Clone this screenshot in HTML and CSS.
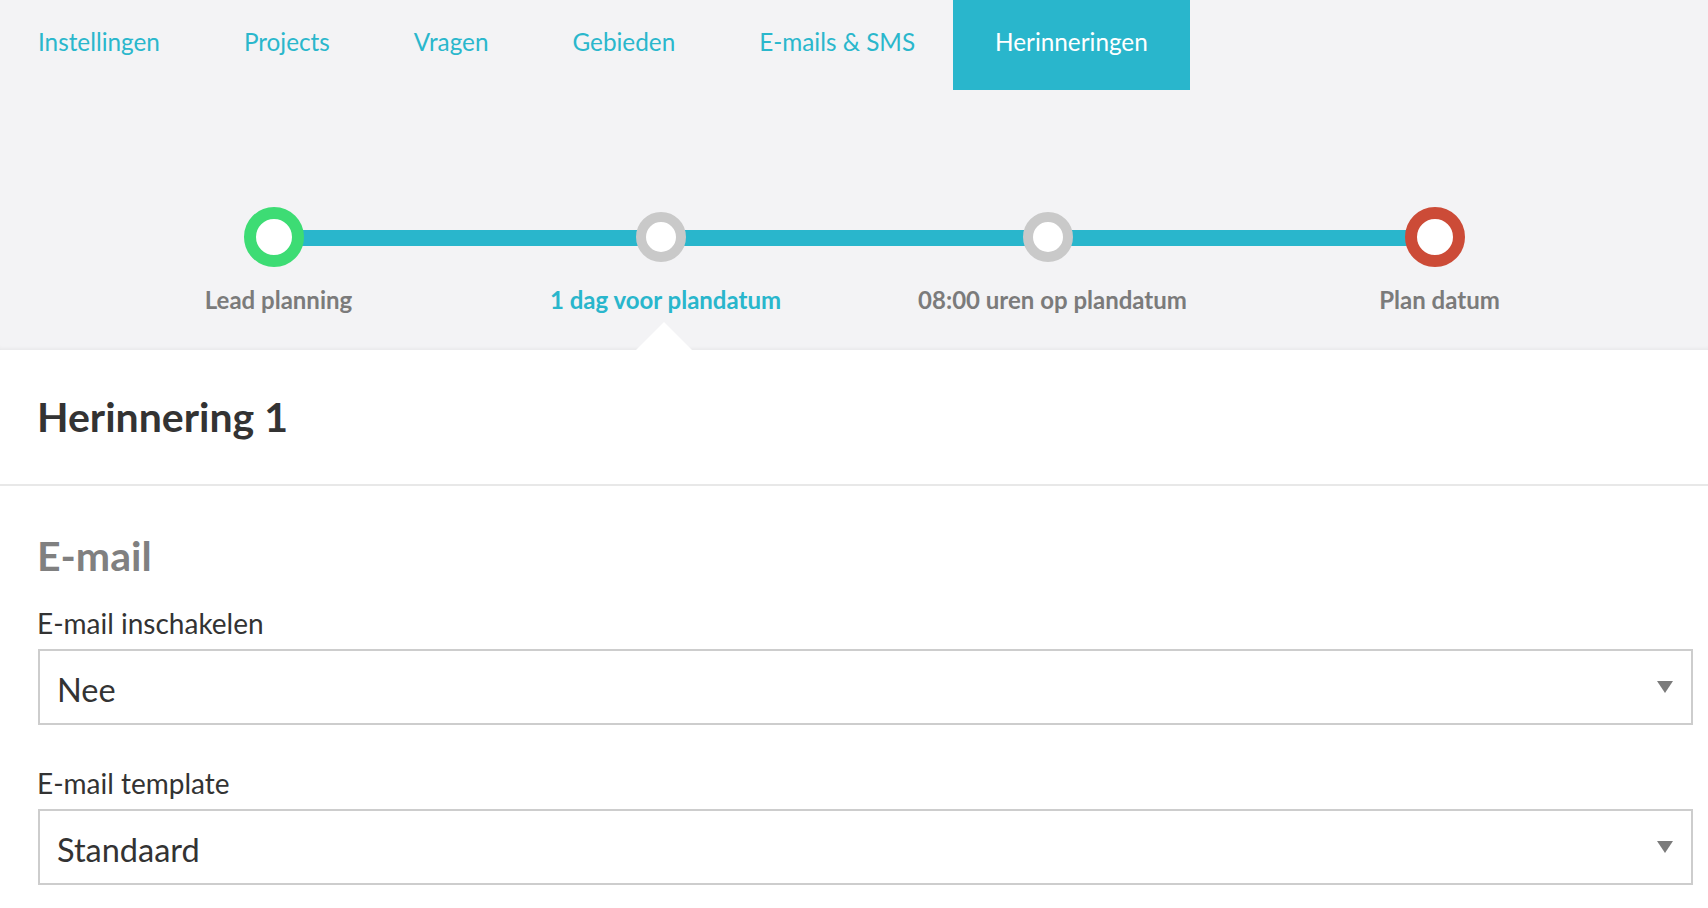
FILE: index.html
```html
<!DOCTYPE html>
<html lang="nl">
<head>
  <meta charset="UTF-8"/>
  <meta name="viewport" content="width=device-width, initial-scale=1.0"/>
  <title>Herinneringen</title>
  <link rel="stylesheet" href="styles.css">
</head>
<body>
  <div class="top">
    <ul class="tabs">
      <li><a href="#">Instellingen</a></li>
      <li><a href="#">Projects</a></li>
      <li><a href="#">Vragen</a></li>
      <li><a href="#">Gebieden</a></li>
      <li><a href="#">E-mails &amp; SMS</a></li>
      <li class="active"><a href="#">Herinneringen</a></li>
    </ul>

    <div class="timeline">
      <div class="step">
        <div class="dot-wrap"><span class="dot big green"></span></div>
        <span class="label">Lead planning</span>
      </div>
      <div class="step current">
        <div class="dot-wrap"><span class="dot"></span></div>
        <span class="label">1 dag voor plandatum</span>
        <span class="pointer"></span>
      </div>
      <div class="step">
        <div class="dot-wrap"><span class="dot"></span></div>
        <span class="label">08:00 uren op plandatum</span>
      </div>
      <div class="step">
        <div class="dot-wrap"><span class="dot big red"></span></div>
        <span class="label">Plan datum</span>
      </div>
    </div>
  </div>

  <div class="panel-head">
    <h1>Herinnering 1</h1>
  </div>

  <div class="panel-body">
    <h2>E-mail</h2>

    <div class="field">
      <label>E-mail inschakelen</label>
      <div class="select">
        <span>Nee</span>
        <svg class="caret" width="16" height="12" viewBox="0 0 16 12"><path d="M0 0h16L8 12z" fill="#7b7b7b"/></svg>
      </div>
    </div>

    <div class="field">
      <label>E-mail template</label>
      <div class="select">
        <span>Standaard</span>
        <svg class="caret" width="16" height="12" viewBox="0 0 16 12"><path d="M0 0h16L8 12z" fill="#7b7b7b"/></svg>
      </div>
    </div>
  </div>
</body>
</html>
```

FILE: styles.css
```css
body {
  font-family: Lato, "Open Sans", sans-serif;
  margin: 0;
  background: #fff;
  color: #333;
}

/* grey header band */
.top {
  height: 350px;
  background: #f3f3f5;
  box-shadow: inset 0 -4px 4px -3px rgba(0,0,0,0.06);
}

.tabs {
  display: flex;
  list-style: none;
  margin: 0 0 0 -4px;
  padding: 0;
}

.tabs a {
  display: block;
  padding: 27px 42px 33px;
  line-height: 30px;
  font-size: 24.3px;
  color: #2ab7cc;
  text-decoration: none;
}

.tabs li:nth-child(5) a {
  padding-right: 38px;
}

.tabs .active a {
  background: #29b6cc;
  color: #fff;
}

/* timeline */
.timeline {
  position: relative;
  display: grid;
  grid-template-columns: repeat(4, 1fr);
  width: 1548px;
  margin: 117px auto 0;
}

.timeline:before {
  content: "";
  position: absolute;
  top: 23px;
  left: 12.5%;
  right: 12.5%;
  height: 16px;
  background: #29b6cc;
}

.step {
  position: relative;
  display: flex;
  flex-direction: column;
  align-items: center;
}

.dot-wrap {
  position: relative;
  height: 60px;
  display: flex;
  align-items: center;
}

.dot {
  width: 50px;
  height: 50px;
  box-sizing: border-box;
  border: 10px solid #c9c9c9;
  border-radius: 50%;
  background: #fff;
}

.dot.big {
  width: 60px;
  height: 60px;
  border-width: 12px;
}

.dot.green { border-color: #3ddc74; }
.dot.red { border-color: #cc4b37; }

.label {
  margin-top: 17px;
  padding-left: 10px;
  font-size: 24px;
  line-height: 32px;
  font-weight: 700;
  color: #7b7b7b;
}

.step.current .label {
  color: #29b6cc;
}

.pointer {
  position: absolute;
  top: 115px;
  left: 50%;
  margin-left: -25px;
  width: 0;
  height: 0;
  border-left: 28px solid transparent;
  border-right: 28px solid transparent;
  border-bottom: 28px solid #fff;
}

/* panel */
.panel-head {
  padding: 43px 15px 43px 37px;
  border-bottom: 2px solid #e8e8e8;
}

h1, h2 {
  margin: 0;
  font-size: 41px;
  line-height: 48px;
  font-weight: 700;
}

h1 { color: #333; }

h2 {
  color: #808080;
  margin-bottom: 27px;
}

.panel-body {
  padding: 46px 15px 0 37px;
}

.field {
  margin-bottom: 42px;
}

.field label {
  display: block;
  font-size: 28px;
  line-height: 32px;
  margin-bottom: 10px;
  color: #333;
}

.select {
  display: flex;
  align-items: center;
  justify-content: space-between;
  box-sizing: border-box;
  height: 76px;
  margin-left: 1px;
  padding: 4px 18px 0 17px;
  border: 2px solid #cdcdcd;
  font-size: 32.5px;
  color: #333;
}

.caret {
  margin-top: -4px;
}
```
